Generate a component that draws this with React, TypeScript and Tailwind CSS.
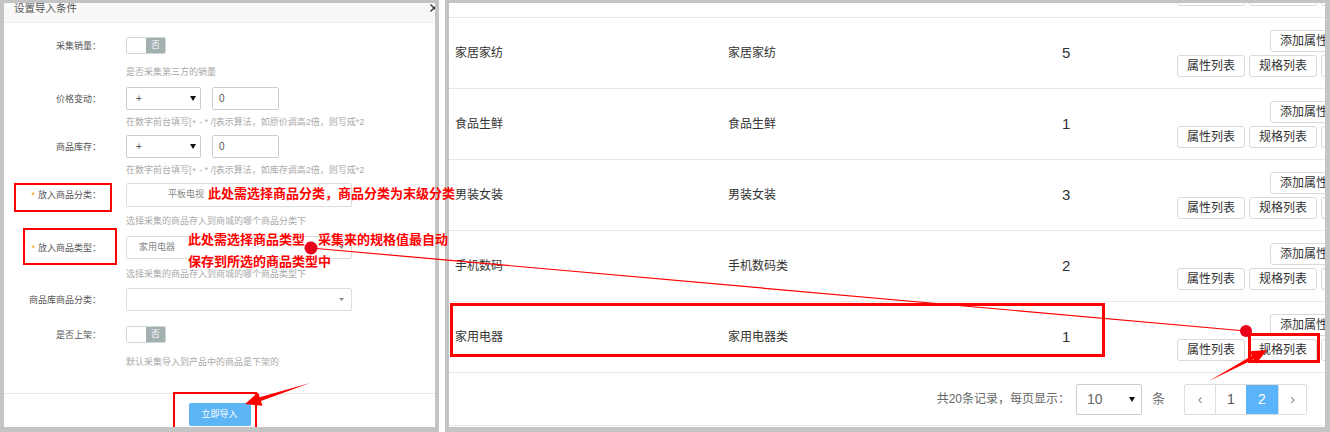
import type { ReactNode } from "react";

const FONT = "font-['Liberation_Sans','Noto_Sans_CJK_SC',sans-serif]";

const rows = [
  { name: "家居家纺", cat: "家居家纺", count: 5 },
  { name: "食品生鲜", cat: "食品生鲜", count: 1 },
  { name: "男装女装", cat: "男装女装", count: 3 },
  { name: "手机数码", cat: "手机数码类", count: 2 },
  { name: "家用电器", cat: "家用电器类", count: 1 },
];

function Caret({ light }: { light?: boolean }) {
  return light ? (
    <svg width="5" height="3" viewBox="0 0 5 3" className="shrink-0">
      <path d="M0 0h5L2.5 3z" fill="#8a8a8a" />
    </svg>
  ) : (
    <svg width="6" height="5" viewBox="0 0 6 5" className="shrink-0">
      <path d="M0 0h6L3 5z" fill="#111" />
    </svg>
  );
}

function Toggle() {
  return (
    <div className="flex h-[17px] w-[40px] overflow-hidden rounded-[2px] border border-[#cfd6d6]">
      <div className="w-[20px] bg-white" />
      <div className="flex w-[20px] items-center justify-center bg-[#a2b0b0] text-[9px] leading-none text-white">否</div>
    </div>
  );
}

function Field({
  label,
  required,
  className,
  children,
}: {
  label: string;
  required?: boolean;
  className?: string;
  children: ReactNode;
}) {
  return (
    <div className={`flex shrink-0 items-center ${className ?? ""}`}>
      <div className="w-[97px] shrink-0 text-right text-[9px] leading-[12px] text-[#555]">
        {required && <span className="mr-[3px] text-[#f90]">*</span>}
        {label}：
      </div>
      <div className="ml-[25px] flex items-center">{children}</div>
    </div>
  );
}

function Help({ className, children }: { className?: string; children: ReactNode }) {
  return (
    <div className={`shrink-0 pl-[122px] text-[9px] leading-[16px] whitespace-nowrap text-[#aaa] ${className ?? ""}`}>
      {children}
    </div>
  );
}

function Btn({ children }: { children: ReactNode }) {
  return (
    <span className="inline-flex h-[22px] shrink-0 items-center rounded-[3px] border border-[#d9d9d9] bg-white px-[9px] text-[12px] whitespace-nowrap text-[#333]">
      {children}
    </span>
  );
}

function Row({ name, cat, count, className }: { name: string; cat: string; count: number | string; className?: string }) {
  return (
    <div className={`flex h-[71px] shrink-0 items-center border-b border-[#e8e8e8] text-[12px] text-[#333] ${className ?? ""}`}>
      <div className="w-[279px] shrink-0 pl-[6px]">{name}</div>
      <div className="w-[330px] shrink-0">{cat}</div>
      <div className="w-[110px] shrink-0 pl-[4px] text-[15px]">{count}</div>
      <div className="flex shrink-0 flex-col gap-[3px]">
        <div className="flex pl-[102px]">
          <Btn>添加属性</Btn>
        </div>
        <div className="flex gap-[4px] pl-[9px]">
          <Btn>属性列表</Btn>
          <Btn>规格列表</Btn>
          <Btn>编辑</Btn>
        </div>
      </div>
    </div>
  );
}

function ImportDialog() {
  return (
    <div className="h-[432px] w-[439px] shrink-0 border-[#c4c4c4] border-t-[3px] border-r-[4px] border-b-[5px] border-l-[4px]">
      <div className="flex h-full flex-col overflow-hidden bg-white">
        <div className="flex h-[20px] shrink-0 items-start justify-between border-b border-[#ebebeb] bg-[#f8f8f8] pl-[10px]">
          <span className="text-[10.5px] leading-[10px] text-[#555]">设置导入条件</span>
          <svg width="8" height="8" viewBox="0 0 8 8" className="mt-[1px] -mr-[3px] shrink-0">
            <path d="M0.5 0.5l7 7M7.5 0.5l-7 7" stroke="#333" strokeWidth="1.3" />
          </svg>
        </div>

        <Field label="采集销量" className="mt-[14px]">
          <Toggle />
        </Field>
        <Help className="mt-[10px]">是否采集第三方的销量</Help>

        <Field label="价格变动" className="mt-[7px]">
          <div className="flex h-[23px] w-[75px] items-center justify-between rounded-[2px] border border-[#ccc] pr-[4px] pl-[9px] text-[10px] text-[#555]">
            + <Caret />
          </div>
          <div className="ml-[11px] flex h-[23px] w-[67px] items-center rounded-[2px] border border-[#ccc] pl-[6px] text-[10px] text-[#555]">0</div>
        </Field>
        <Help className="mt-[4px]">在数字前台填写[+ - * /]表示算法，如原价调高2倍，则写成*2</Help>

        <Field label="商品库存" className="mt-[5px]">
          <div className="flex h-[23px] w-[75px] items-center justify-between rounded-[2px] border border-[#ccc] pr-[4px] pl-[9px] text-[10px] text-[#555]">
            + <Caret />
          </div>
          <div className="ml-[11px] flex h-[23px] w-[67px] items-center rounded-[2px] border border-[#ccc] pl-[6px] text-[10px] text-[#555]">0</div>
        </Field>
        <Help className="mt-[4px]">在数字前台填写[+ - * /]表示算法，如库存调高2倍，则写成*2</Help>

        <Field label="放入商品分类" required className="mt-[5px]">
          <div className="flex h-[24px] w-[226px] items-center rounded-[2px] border border-[#ddd] pl-[41px] text-[9px] text-[#888]">平板电视</div>
        </Field>
        <Help className="mt-[6px]">选择采集的商品存入到商城的哪个商品分类下</Help>

        <Field label="放入商品类型" required className="mt-[7px]">
          <div className="flex h-[23px] w-[226px] items-center justify-between rounded-[2px] border border-[#ddd] pr-[7px] pl-[12px] text-[9px] text-[#888]">
            家用电器 <Caret light />
          </div>
        </Field>
        <Help className="mt-[7px]">选择采集的商品存入到商城的哪个商品类型下</Help>

        <Field label="商品库商品分类" className="mt-[6px]">
          <div className="flex h-[23px] w-[226px] items-center justify-end rounded-[2px] border border-[#ddd] pr-[7px]">
            <Caret light />
          </div>
        </Field>

        <Field label="是否上架" className="mt-[15px]">
          <Toggle />
        </Field>
        <Help className="mt-[11px]">默认采集导入到产品中的商品是下架的</Help>

        <div className="mt-auto flex h-[34px] shrink-0 justify-center border-t border-[#e6e6e6] pt-[9px]">
          <div className="flex h-[23px] w-[62px] items-center justify-center rounded-[2px] bg-[#5db5f6] text-[9px] text-white">立即导入</div>
        </div>
      </div>
    </div>
  );
}

function CategoryTable() {
  return (
    <div className="ml-[6px] h-[432px] w-[885px] shrink-0 border-[#c4c4c4] border-t-[3px] border-r-[5px] border-b-[5px] border-l-[4px]">
      <div className="flex h-full flex-col overflow-hidden bg-white">
        <Row name="" cat="" count="" className="-mt-[56px]" />
        {rows.map((r) => (
          <Row key={r.name} name={r.name} cat={r.cat} count={r.count} />
        ))}
        <div className="flex h-[53px] shrink-0 items-center justify-end border-b border-[#e8e8e8] pr-[18px] text-[12px] text-[#666]">
          <span>共20条记录，每页显示：</span>
          <div className="ml-[6px] flex h-[31px] w-[66px] items-center justify-between rounded-[2px] border border-[#ccc] pr-[6px] pl-[10px] text-[14px] text-[#666]">
            10 <Caret />
          </div>
          <span className="ml-[10px] text-[13px] text-[#777]">条</span>
          <div className="ml-[19px] flex h-[31px] overflow-hidden rounded-[2px] border border-[#ddd] text-[14px]">
            <span className="flex w-[30px] items-center justify-center text-[#888]">‹</span>
            <span className="flex w-[31px] items-center justify-center border-l border-[#ddd] text-[#555]">1</span>
            <span className="flex w-[32px] items-center justify-center bg-[#5bb4f9] text-white">2</span>
            <span className="flex w-[28px] items-center justify-center border-l border-[#ddd] text-[#888]">›</span>
          </div>
        </div>
      </div>
    </div>
  );
}

export default function App() {
  return (
    <div className={`relative flex h-[432px] w-[1330px] overflow-hidden bg-white ${FONT}`}>
      <ImportDialog />
      <CategoryTable />

      {/* annotations drawn over the screenshots */}
      <div className="absolute top-[183px] left-[14px] h-[29px] w-[98px] border-2 border-[#f00]" />
      <div className="absolute top-[228px] left-[23px] h-[37px] w-[94px] border-2 border-[#f00]" />
      <div className="absolute top-[392px] left-[173px] h-[35px] w-[84px] border-2 border-b-0 border-[#f00]" />
      <div className="absolute top-[303px] left-[450px] h-[54px] w-[655px] border-[3px] border-[#f00]" />
      <div className="absolute top-[333px] left-[1248px] h-[30px] w-[72px] border-[3px] border-[#f00]" />

      <div className="absolute top-[183px] left-[208px] text-[13px] leading-[22px] font-bold whitespace-nowrap text-[#f00]">
        此处需选择商品分类，商品分类为末级分类
      </div>
      <div className="absolute top-[229px] left-[188px] text-[13px] leading-[22px] font-bold whitespace-nowrap text-[#f00]">
        <div>此处需选择商品类型，采集来的规格值最自动</div>
        <div>保存到所选的商品类型中</div>
      </div>

      <svg className="pointer-events-none absolute inset-0" width="1330" height="432" viewBox="0 0 1330 432">
        <line x1="311" y1="248" x2="1246" y2="331" stroke="#f00" strokeWidth="1.2" />
        <circle cx="311" cy="248" r="6.5" fill="#e8001a" />
        <circle cx="1246" cy="331" r="6" fill="#e8001a" />
        <polygon
          points="310,383 260.9,401 262.5,405.8 245,404 258.1,392.4 259.7,397.2"
          fill="#f00"
        />
        <polygon
          points="1209,381 1253.8,359.3 1256.2,363.7 1267,350 1249.6,351.3 1251.9,355.7"
          fill="#f00"
        />
      </svg>
    </div>
  );
}
